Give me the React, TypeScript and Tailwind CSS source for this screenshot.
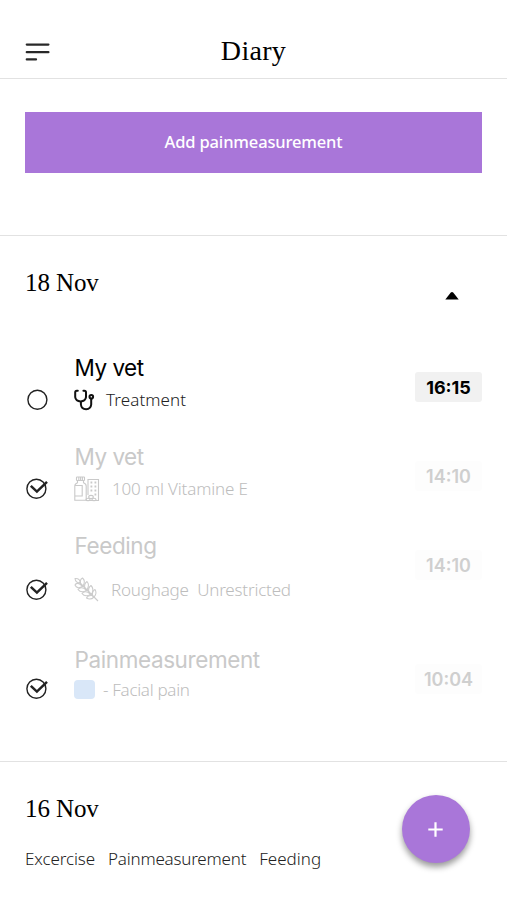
import React from "react";

const serif = "font-['Liberation_Serif',serif]";
const inter = "font-['Inter',sans-serif]";
const noto = "font-['Noto_Sans',sans-serif]";

const StethoscopeIcon = () => (
  <svg width="22" height="22" viewBox="0 0 22 22" fill="none" stroke="#111" strokeWidth="2" strokeLinecap="round">
    <path d="M3.8 1.8H2.8Q1.2 1.8 1.2 3.4V8.2Q1.8 12.2 6.6 12.4Q11.4 12.2 12 8.2V3.4Q12 1.8 10.4 1.8H9.4" />
    <path d="M6.9 13V15.5Q7.4 20.1 12.1 20.2Q16.8 20 17.2 15.5V10" />
    <circle cx="17.3" cy="7.7" r="1.8" />
  </svg>
);

const MedicineIcon = () => (
  <svg width="26" height="26" viewBox="0 0 26 26" fill="none" stroke="#c9c9c9" strokeWidth="1.1">
    <rect x="2.5" y="1" width="8" height="3.5" rx="0.6" />
    <path d="M4.8 1v3M6.6 1v3M8.4 1v3M3.5 4.5v2.2Q.8 7.7.8 10v14.2h11.4V10q0-2.3-2.7-3.3V4.5M.8 9.5h7.4v10.5H.8" />
    <path d="M14 19V3.5h10.5v21H12" />
    <path d="M16.5 6.5h1.8M20.5 6.5h1.8M16.5 10.5h1.8M20.5 10.5h1.8M16.5 14.5h1.8M20.5 14.5h1.8M20.5 18.5h1.8" strokeWidth="2" />
    <ellipse cx="17" cy="21" rx="2.3" ry="1.6" />
    <ellipse cx="14" cy="23.5" rx="2" ry="1.3" />
    <ellipse cx="20" cy="23.5" rx="2" ry="1.3" />
  </svg>
);

const WheatIcon = () => (
  <svg width="26" height="26" viewBox="0 0 26 26" fill="none" stroke="#cccccc" strokeWidth="1.1" strokeLinejoin="round">
    <path d="M5 5L24 24" />
    <path d="M1 1.5Q6 1 6.5 6Q1.5 6 1 1.5Z" />
    <path d="M7 7.5Q5 3 8.5 1Q12 4 9 9Z" />
    <path d="M11 11.5Q9.5 7 13 4.5Q16 8 13 13Z" />
    <path d="M15 15.5Q13.5 11 17 8.5Q20.5 12 17.5 17.5Z" />
    <path d="M6.5 7.5Q2.5 5 1 8Q3 12.5 8.5 9.5Z" />
    <path d="M10.5 11.5Q6 9.5 4 12.5Q7 16.5 12.5 13.5Z" />
    <path d="M14.5 15.5Q10 13.5 8 16.5Q11 20.5 16.5 17.5Z" />
    <path d="M18 18.5Q14 18 12.5 21Q16.5 23.5 20 20Z" />
    <path d="M18.5 18Q18 14 21 12.5Q23.5 16.5 20 20" />
  </svg>
);

const StatusIcon = ({ done }: { done: boolean }) => (
  <svg width="24" height="24" viewBox="0 0 24 24" fill="none" stroke="#222">
    <circle cx={done ? 11.4 : 12.4} cy="11.7" r="9.5" strokeWidth="1.4" />
    {done && <path d="M5.8 8.8L11.9 14.6L22 4.8" strokeWidth="2.5" />}
  </svg>
);

const entries = [
  {
    title: "My vet",
    titleClass: "tracking-[-0.5px]",
    icon: <StethoscopeIcon />,
    text: "Treatment",
    textClass: "ml-[10px] text-[17px] tracking-[0.1px]",
    time: "16:15",
    done: false,
    height: "h-[89px]",
    gap: "mt-[2px]",
  },
  {
    title: "My vet",
    titleClass: "tracking-[-0.5px]",
    icon: <MedicineIcon />,
    text: "100 ml Vitamine E",
    textClass: "ml-[12px] text-[17px] tracking-[-0.15px]",
    time: "14:10",
    done: true,
    height: "h-[89px]",
    gap: "mt-[2px]",
  },
  {
    title: "Feeding",
    titleClass: "tracking-[-0.4px]",
    icon: <WheatIcon />,
    text: "Roughage  Unrestricted",
    textClass: "ml-[11px] text-[17px] tracking-[-0.2px]",
    time: "14:10",
    done: true,
    height: "h-[114px]",
    gap: "mt-[14px]",
  },
  {
    title: "Painmeasurement",
    titleClass: "tracking-[-0.4px]",
    icon: <div className="h-[19px] w-[21px] rounded-[4px] bg-[#d9e7f8]" />,
    text: "- Facial pain",
    textClass: "ml-[8px] pt-[2px] text-[17px] tracking-[-0.3px]",
    time: "10:04",
    done: true,
    height: "h-[116px]",
    gap: "mt-[-1px]",
  },
];

const App = () => {
  return (
    <div className={`relative flex h-[900px] w-[507px] flex-col overflow-hidden bg-white text-black ${noto}`}>
      <header className="grid h-[79px] shrink-0 grid-cols-[1fr_auto_1fr] items-center border-b border-[#e2e2e2] px-[25px] pt-[25px]">
        <svg width="25" height="20" viewBox="0 0 25 20" stroke="#282828" strokeWidth="2.3" strokeLinecap="round">
          <path d="M1.8 2.6H23.4M1.8 10.2H23.4M1.8 17.4H11" />
        </svg>
        <h1 className={`-mt-0.5 text-[28px] leading-[34px] tracking-[0.3px] ${serif}`}>Diary</h1>
      </header>

      <section className="h-[157px] shrink-0 border-b border-[#e2e2e2] px-[25px] pt-[33px]">
        <button className="flex h-[61px] w-[457px] items-center justify-center bg-[#a976d9] text-[16.5px] font-medium tracking-[-0.15px] text-white">
          Add painmeasurement
        </button>
      </section>

      <section className="h-[526px] shrink-0 border-b border-[#e2e2e2] px-[25px] pt-[32px]">
        <div className="flex h-[85px] justify-between">
          <h2 className={`text-[25px] leading-[30px] tracking-[-0.1px] ${serif}`}>18 Nov</h2>
          <svg className="mt-[23px] mr-[23px]" width="14" height="9" viewBox="0 0 14 9">
            <path d="M.3 8.5L5.8 1.5Q7 .5 8.2 1.5L13.7 8.5Z" />
          </svg>
        </div>

        {entries.map((entry, index) => (
          <div key={index} className={`grid grid-cols-[49px_1fr_67px] ${entry.height}`}>
            <div className="flex flex-col">
              <div className="h-[30px]" />
              <div className={`flex h-[30px] items-center ${entry.gap}`}>
                <StatusIcon done={entry.done} />
              </div>
            </div>
            <div className={entry.done ? "text-[#c9c9c9]" : "text-black"}>
              <h3 className={`pl-[0.5px] text-[22.5px] leading-[30px] ${inter} ${entry.titleClass}`}>{entry.title}</h3>
              <div className={`flex h-[30px] items-center ${entry.gap}`}>
                {entry.icon}
                <span
                  className={`font-light whitespace-pre ${entry.textClass} ${entry.done ? "text-[#bdbdbd]" : "text-[#222]"}`}
                >
                  {entry.text}
                </span>
              </div>
            </div>
            <div
              className={`mt-[19px] flex h-[30px] items-center justify-center rounded-[3px] text-[18px] ${inter} ${
                entry.done ? "bg-[#fdfdfd] font-semibold text-[#cfcfcf]" : "bg-[#f1f1f1] font-bold text-black"
              }`}
            >
              {entry.time}
            </div>
          </div>
        ))}
      </section>

      <section className="px-[25px] pt-[32px]">
        <h2 className={`text-[25px] leading-[30px] tracking-[-0.1px] ${serif}`}>16 Nov</h2>
        <div className="mt-[20px] flex gap-[13px] text-[17px] leading-[30px] font-light text-[#222]">
          <span className="tracking-[-0.1px]">Excercise</span>
          <span className="tracking-[-0.2px]">Painmeasurement</span>
          <span>Feeding</span>
        </div>
      </section>

      {/* Floating add button */}
      <button className="absolute top-[795px] left-[402px] flex size-[68px] items-center justify-center rounded-full bg-[#a976d9] shadow-[0_4px_6px_rgba(0,0,0,0.4)]">
        <svg className="mr-[2px]" width="15" height="15" viewBox="0 0 15 15" stroke="#fff" strokeWidth="2.2">
          <path d="M7.5 .3V14.7M.3 7.5H14.7" />
        </svg>
      </button>
    </div>
  );
};

export default App;
